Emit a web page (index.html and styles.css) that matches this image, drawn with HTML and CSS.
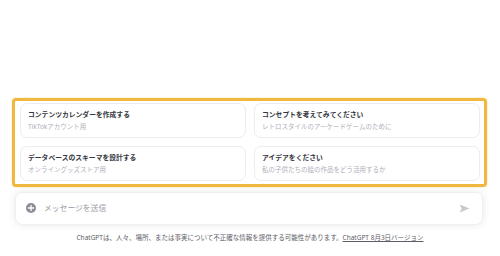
FILE: index.html
```html
<!DOCTYPE html>
<html lang="ja">
<head>
<meta charset="utf-8">
<title>ChatGPT</title>
<link rel="stylesheet" href="styles.css">
</head>
<body>
<div class="page">
  <div class="suggest-frame">
    <div class="card">
      <div class="card-title">コンテンツカレンダーを作成する</div>
      <div class="card-sub">TikTokアカウント用</div>
    </div>
    <div class="card">
      <div class="card-title">コンセプトを考えてみてください</div>
      <div class="card-sub">レトロスタイルのアーケードゲームのために</div>
    </div>
    <div class="card">
      <div class="card-title">データベースのスキーマを設計する</div>
      <div class="card-sub">オンライングッズストア用</div>
    </div>
    <div class="card">
      <div class="card-title">アイデアをください</div>
      <div class="card-sub">私の子供たちの絵の作品をどう活用するか</div>
    </div>
  </div>
  <div class="composer">
    <svg class="plus" width="10" height="10" viewBox="0 0 10 10">
      <circle cx="5" cy="5" r="5" fill="#8b8b96"/>
      <path d="M5 2.4V7.6M2.4 5H7.6" stroke="#fff" stroke-width="1.3" stroke-linecap="round"/>
    </svg>
    <span class="placeholder">メッセージを送信</span>
    <svg class="send" width="11" height="9" viewBox="0 0 11 9">
      <path d="M0.8 0.6 L10.4 4.5 L0.8 8.4 L2.6 4.5 Z" fill="#c8c8d0"/>
    </svg>
  </div>
  <div class="footer">ChatGPTは、人々、場所、または事実について不正確な情報を提供する可能性があります。<span class="link">ChatGPT 8月3日バージョン</span></div>
</div>
</body>
</html>
```
FILE: styles.css
```css
html, body {
  margin: 0;
  padding: 0;
  background: #ffffff;
}
body {
  font-family: "Noto Sans", "Noto Sans CJK JP", sans-serif;
  color: #353740;
}
.page {
  width: 500px;
  height: 256px;
  box-sizing: border-box;
  display: flex;
  flex-direction: column;
  justify-content: flex-end;
  padding: 0 0 13px 0;
}
.suggest-frame {
  margin: 0 13px 0 12px;
  border: 3px solid #f0b83e;
  border-radius: 4px;
  box-shadow: 0 0 2px rgba(230, 170, 40, 0.45);
  padding: 2px 4px 3px 5px;
  display: grid;
  grid-template-columns: 1fr 1fr;
  column-gap: 8px;
  row-gap: 8px;
}
.card {
  height: 35px;
  box-sizing: border-box;
  border: 1px solid #ececf1;
  border-radius: 7px;
  padding: 0 7px;
  display: flex;
  flex-direction: column;
  justify-content: center;
  font-family: "Noto Sans", "Noto Sans CJK JP", sans-serif;
}
.card-title {
  font-size: 6.8px;
  line-height: 11.5px;
  font-weight: 700;
  color: #353740;
  white-space: nowrap;
}
.card-sub {
  font-size: 6.5px;
  line-height: 11.5px;
  color: #b0b0ba;
  white-space: nowrap;
}
.composer {
  margin: 5px 17px 0 15px;
  height: 33px;
  box-sizing: border-box;
  border: 1px solid #efeff2;
  border-radius: 7px;
  box-shadow: 0 0 8px rgba(0, 0, 0, 0.09);
  display: flex;
  align-items: center;
  padding: 0 12px 0 10px;
  background: #fff;
}
.plus {
  flex: none;
  margin-right: 8px;
  margin-top: -1px;
}
.placeholder {
  flex: 1;
  font-size: 7.8px;
  color: #9a9aa4;
  line-height: 10px;
  margin-top: -1px;
}
.send {
  flex: none;
  margin-top: -1px;
}
.footer {
  margin-top: 8px;
  text-align: center;
  font-size: 6.5px;
  line-height: 10px;
  color: #5d5d67;
  white-space: nowrap;
}
.link {
  text-decoration: underline;
}
```
